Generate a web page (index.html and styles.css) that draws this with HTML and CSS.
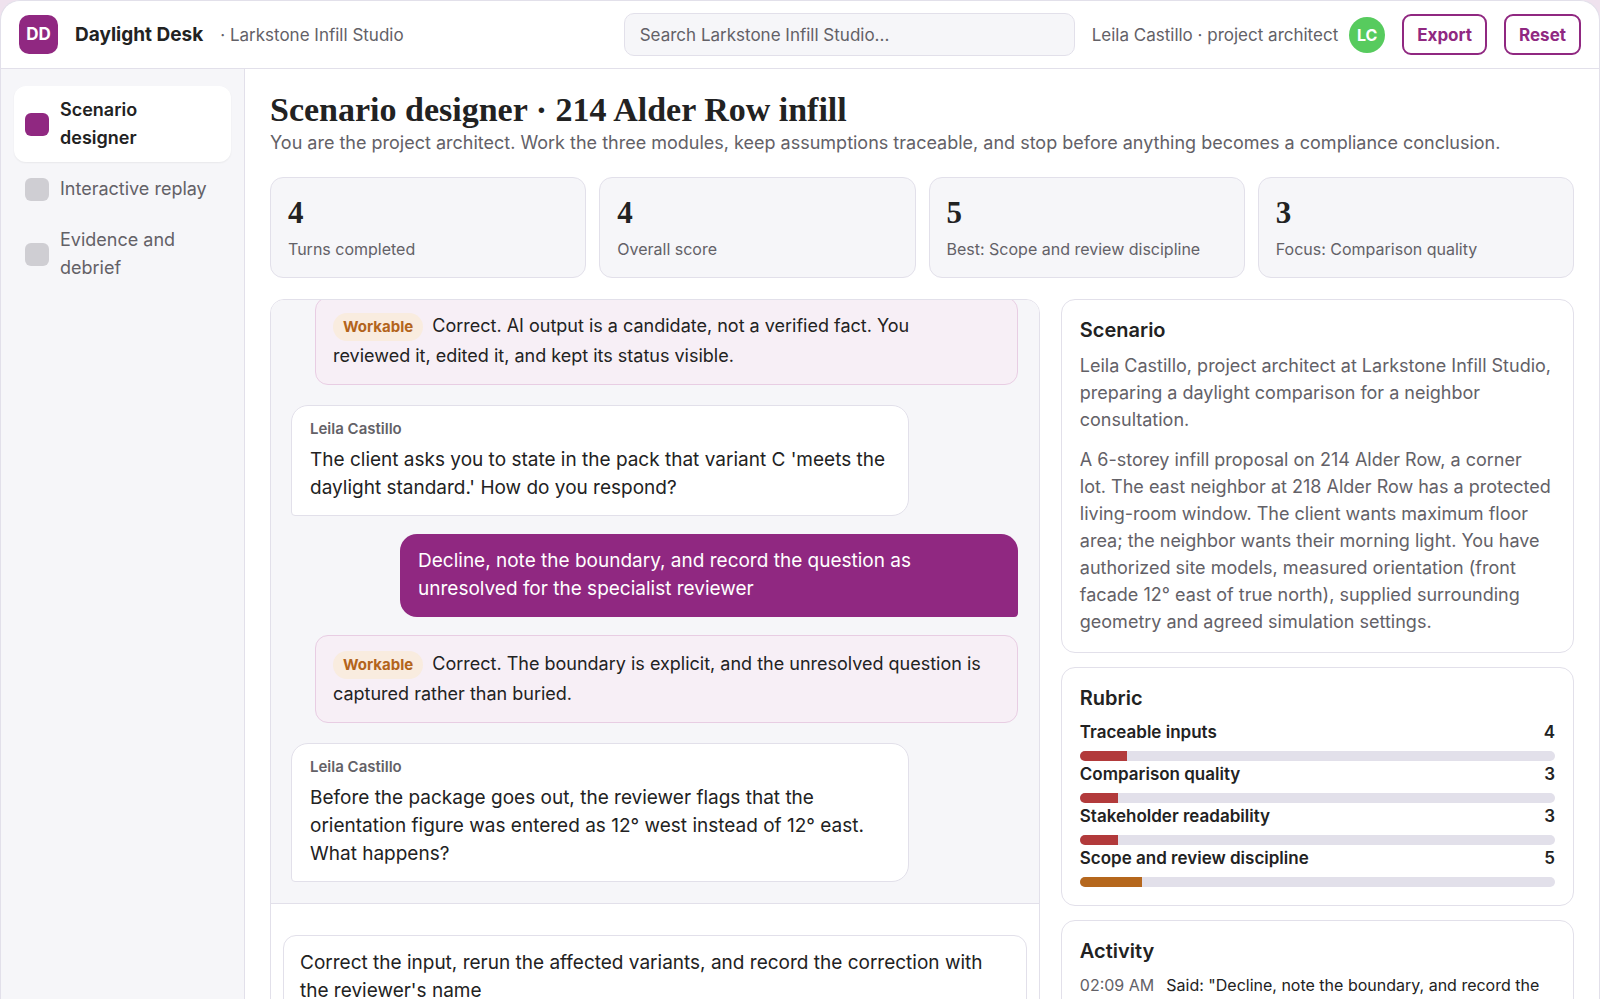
FILE: index.html
```html
<!DOCTYPE html>
<html lang="en">
<head>
    <meta charset="UTF-8">
    <meta name="viewport" content="width=device-width, initial-scale=1">
    <title>Daylight Desk</title>
    <link rel="stylesheet" href="styles.css">
</head>
<body>
    <div class="app">
        <header class="topbar">
            <div class="logo">DD</div>
            <div class="brand">Daylight Desk</div>
            <div class="studio">· Larkstone Infill Studio</div>
            <input class="search" type="search" placeholder="Search Larkstone Infill Studio..." aria-label="Search Larkstone Infill Studio">
            <div class="user">
                <span>Leila Castillo · project architect</span>
                <span class="avatar">LC</span>
            </div>
            <button class="btn" type="button">Export</button>
            <button class="btn" type="button">Reset</button>
        </header>
        <div class="body">
            <nav class="sidebar">
                <a class="nav_item active" href="#designer"><span class="nav_icon"></span>Scenario designer</a>
                <a class="nav_item" href="#replay"><span class="nav_icon"></span>Interactive replay</a>
                <a class="nav_item" href="#evidence"><span class="nav_icon"></span>Evidence and debrief</a>
            </nav>
            <main class="main">
                <h1>Scenario designer · 214 Alder Row infill</h1>
                <p class="intro">You are the project architect. Work the three modules, keep assumptions traceable, and stop before anything becomes a compliance conclusion.</p>
                <div class="stats">
                    <div class="stat">
                        <div class="stat_num">4</div>
                        <div class="stat_label">Turns completed</div>
                    </div>
                    <div class="stat">
                        <div class="stat_num">4</div>
                        <div class="stat_label">Overall score</div>
                    </div>
                    <div class="stat">
                        <div class="stat_num">5</div>
                        <div class="stat_label">Best: Scope and review discipline</div>
                    </div>
                    <div class="stat">
                        <div class="stat_num">3</div>
                        <div class="stat_label">Focus: Comparison quality</div>
                    </div>
                </div>
                <div class="columns">
                    <section class="chat">
                        <div class="chat_log">
                            <div class="feedback"><span class="badge">Workable</span> Correct. AI output is a candidate, not a verified fact. You reviewed it, edited it, and kept its status visible.</div>
                            <div class="bubble">
                                <div class="speaker">Leila Castillo</div>
                                The client asks you to state in the pack that variant C 'meets the daylight standard.' How do you respond?
                            </div>
                            <div class="bubble mine">Decline, note the boundary, and record the question as unresolved for the specialist reviewer</div>
                            <div class="feedback"><span class="badge">Workable</span> Correct. The boundary is explicit, and the unresolved question is captured rather than buried.</div>
                            <div class="bubble">
                                <div class="speaker">Leila Castillo</div>
                                Before the package goes out, the reviewer flags that the orientation figure was entered as 12° west instead of 12° east. What happens?
                            </div>
                        </div>
                        <div class="choices">
                            <button class="choice" type="button">Correct the input, rerun the affected variants, and record the correction with the reviewer's name</button>
                        </div>
                    </section>
                    <aside class="side">
                        <section class="card">
                            <h2>Scenario</h2>
                            <p>Leila Castillo, project architect at Larkstone Infill Studio, preparing a daylight comparison for a neighbor consultation.</p>
                            <p>A 6-storey infill proposal on 214 Alder Row, a corner lot. The east neighbor at 218 Alder Row has a protected living-room window. The client wants maximum floor area; the neighbor wants their morning light. You have authorized site models, measured orientation (front facade 12° east of true north), supplied surrounding geometry and agreed simulation settings.</p>
                        </section>
                        <section class="card">
                            <h2>Rubric</h2>
                            <div class="score"><span>Traceable inputs</span><span>4</span></div>
                            <div class="bar"><div class="fill" style="width: 10%"></div></div>
                            <div class="score"><span>Comparison quality</span><span>3</span></div>
                            <div class="bar"><div class="fill" style="width: 8%"></div></div>
                            <div class="score"><span>Stakeholder readability</span><span>3</span></div>
                            <div class="bar"><div class="fill" style="width: 8%"></div></div>
                            <div class="score"><span>Scope and review discipline</span><span>5</span></div>
                            <div class="bar"><div class="fill warn" style="width: 13%"></div></div>
                        </section>
                        <section class="card">
                            <h2>Activity</h2>
                            <div class="event">
                                <time>02:09 AM</time>
                                <span>Said: "Decline, note the boundary, and record the question as unresolved for the specialist reviewer"</span>
                            </div>
                        </section>
                    </aside>
                </div>
            </main>
        </div>
    </div>
</body>
</html>
```
FILE: styles.css
```css
* {
    box-sizing: border-box;
}
body {
    margin: 0;
    background: #efe2ee;
    color: #222;
    font: 19px/28px Inter, "Liberation Sans", sans-serif;
}
h1, h2, p {
    margin: 0;
}
button, input {
    font: inherit;
}
.app {
    display: flex;
    flex-direction: column;
    height: 100vh;
    overflow: hidden;
    background: #fff;
    border: 1px solid #e2e0ea;
    border-bottom: 0;
    border-radius: 20px 20px 0 0;
}

/* header */
.topbar {
    display: flex;
    align-items: center;
    flex: none;
    gap: 17px;
    height: 68px;
    padding: 0 18px;
    border-bottom: 1px solid #e2e0ea;
}
.logo {
    width: 39px;
    height: 39px;
    border-radius: 10px;
    background: #902881;
    color: #fff;
    font-size: 17px;
    font-weight: 700;
    line-height: 39px;
    text-align: center;
}
.brand {
    font-weight: 700;
}
.studio, .user {
    color: #636167;
    font-size: 17px;
}
.search {
    width: 451px;
    height: 43px;
    margin-left: auto;
    padding: 0 15px;
    border: 1px solid #e2e0ea;
    border-radius: 10px;
    background: #f6f6f9;
    font-size: 17px;
}
.search::placeholder {
    color: #636167;
}
.user {
    display: flex;
    align-items: center;
    gap: 11px;
}
.avatar {
    width: 36px;
    height: 36px;
    border-radius: 50%;
    background: #57cb5e;
    color: #fff;
    font-size: 16px;
    font-weight: 700;
    line-height: 36px;
    text-align: center;
}
.btn {
    height: 41px;
    padding: 0 13px;
    border: 2px solid #902881;
    border-radius: 9px;
    background: #fff;
    color: #902881;
    font-size: 17px;
    font-weight: 700;
}

.body {
    display: flex;
    flex: 1;
    min-height: 0;
}

/* sidebar */
.sidebar {
    display: flex;
    flex-direction: column;
    flex: none;
    gap: 3px;
    width: 244px;
    padding: 17px 13px;
    background: #f6f6f9;
    border-right: 1px solid #e2e0ea;
}
.nav_item {
    display: flex;
    align-items: center;
    gap: 11px;
    padding: 10px 16px 10px 11px;
    border-radius: 12px;
    color: #636167;
    font-size: 18px;
    text-decoration: none;
}
.nav_icon {
    flex: none;
    width: 24px;
    height: 23px;
    border-radius: 6px;
    background: #cfced3;
}
.active {
    background: #fff;
    box-shadow: 0 1px 2px rgba(0, 0, 0, .06);
    color: #222;
    font-weight: 600;
}
.active .nav_icon {
    background: #902881;
}

/* main */
.main {
    flex: 1;
    min-width: 0;
    padding: 25px;
    overflow: hidden;
}
h1 {
    font: bold 34px/32px "Liberation Serif", serif;
}
.intro {
    margin: 3px 0 20px;
    color: #636167;
    font-size: 18px;
}
.stats {
    display: grid;
    grid-template-columns: repeat(4, 1fr);
    gap: 13px;
    margin-bottom: 21px;
}
.stat {
    padding: 17px;
    border: 1px solid #e2e0ea;
    border-radius: 13px;
    background: #f6f6f9;
}
.stat_num {
    margin-bottom: 7px;
    font: bold 31px/36px "Liberation Serif", serif;
}
.stat_label {
    color: #636167;
    font-size: 16px;
    line-height: 22px;
}
.columns {
    display: grid;
    grid-template-columns: 3fr 2fr;
    align-items: start;
    gap: 21px;
}

/* chat */
.chat {
    border: 1px solid #e2e0ea;
    border-radius: 14px;
    overflow: hidden;
}
.chat_log {
    display: flex;
    flex-direction: column;
    justify-content: flex-end;
    gap: 18px;
    height: 604px;
    padding: 21px 21px 21px 20px;
    overflow: hidden;
    background: #f6f6f9;
    border-bottom: 1px solid #e2e0ea;
}
.bubble {
    flex: none;
    align-self: flex-start;
    width: 85%;
    padding: 12px 18px 13px;
    border: 1px solid #e2e0ea;
    border-radius: 17px 17px 17px 4px;
    background: #fff;
}
.mine {
    align-self: flex-end;
    padding: 13px 18px 14px;
    border: 0;
    border-radius: 17px 17px 4px 17px;
    background: #902881;
    color: #fff;
}
.speaker {
    margin-bottom: 7px;
    color: #636167;
    font-size: 15px;
    font-weight: 600;
    line-height: 21px;
}
.feedback {
    flex: none;
    margin: 0 0 2px 24px;
    padding: 13px 28px 13px 17px;
    border: 1px solid #e8cde3;
    border-radius: 13px;
    background: #f7eff6;
    font-size: 18px;
    line-height: 30px;
}
.badge {
    display: inline-block;
    margin-right: 4px;
    padding: 3px 10px;
    border-radius: 14px;
    background: #f9ecdf;
    color: #b3641c;
    font-size: 15px;
    font-weight: 700;
    line-height: 22px;
}
.choices {
    padding: 31px 12px 13px;
}
.choice {
    width: 100%;
    padding: 13px 16px;
    border: 1px solid #e2e0ea;
    border-radius: 13px;
    background: #fff;
    color: #222;
    text-align: left;
}

/* right column */
.side {
    display: grid;
    gap: 14px;
}
.card {
    padding: 17px 18px;
    border: 1px solid #e2e0ea;
    border-radius: 14px;
}
h2 {
    margin-bottom: 9px;
    font-size: 20px;
    font-weight: 600;
    line-height: 26px;
}
.card p {
    padding-right: 3px;
    color: #636167;
    font-size: 18px;
    line-height: 27px;
}
.card p + p {
    margin-top: 13px;
}
.score {
    display: flex;
    justify-content: space-between;
    font-size: 17px;
    font-weight: 600;
    line-height: 24px;
}
.bar {
    height: 10px;
    margin: 7px 0 1px;
    border-radius: 5px;
    overflow: hidden;
    background: #e2e0ea;
}
.fill {
    height: 100%;
    background: #b23a3b;
}
.warn {
    background: #b5671d;
}
.event {
    display: flex;
    gap: 12px;
    font-size: 16px;
    line-height: 24px;
}
.event time {
    flex: none;
    color: #636167;
}
```
